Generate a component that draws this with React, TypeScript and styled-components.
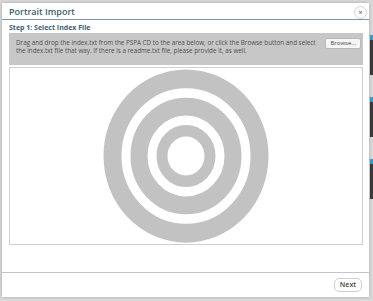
import React from "react";
import styled, { createGlobalStyle } from "styled-components";

const GlobalStyle = createGlobalStyle`
  html, body {
    margin: 0;
    padding: 0;
    background: #d6d6d6;
    font-family: "Open Sans", "Liberation Sans", sans-serif;
  }
`;

const Page = styled.div`
  position: relative;
  width: 373px;
  height: 301px;
  overflow: hidden;
  background: #d9d9d9;
`;

const Thumbs = styled.div`
  position: absolute;
  top: 35px;
  right: 0;
  width: 3px;
  display: flex;
  flex-direction: column;
  gap: 22px;
`;

const Thumb = styled.div`
  height: 40px;
  background: linear-gradient(#2aa0d8 0 5px, #3a3a3a 5px);
`;

const Modal = styled.div`
  position: absolute;
  top: 3px;
  left: 2px;
  width: 367px;
  height: 294px;
  background: #ffffff;
  box-shadow: 0 0 3px rgba(0, 0, 0, 0.25);
  display: flex;
  flex-direction: column;
`;

const Header = styled.div`
  height: 17px;
  display: flex;
  align-items: center;
  justify-content: space-between;
  padding: 1px 2px 0 7px;
  box-sizing: border-box;
  border-bottom: 1px solid #7c97a6;
`;

const Title = styled.div`
  font-size: 9px;
  font-weight: 600;
  color: #3c5c70;
`;

const Close = styled.div`
  width: 11px;
  height: 11px;
  margin-top: 2px;
  border-radius: 50%;
  border: 1px solid #d4d4d4;
  color: #777;
  font-size: 7px;
  line-height: 11px;
  text-align: center;
  font-weight: 700;
`;

const Body = styled.div`
  display: flex;
  flex-direction: column;
  padding: 3px 6px 0 7px;
`;

const Step = styled.div`
  font-size: 7px;
  font-weight: 700;
  color: #3d6078;
  height: 10px;
  line-height: 10px;
`;

const Notice = styled.div`
  height: 32px;
  background: #c7c7c7;
  display: flex;
  align-items: flex-start;
  justify-content: space-between;
  padding: 5px 2px 0 7px;
  box-sizing: border-box;
`;

const NoticeText = styled.p`
  margin: 1px 0 0;
  width: 300px;
  font-size: 6.3px;
  line-height: 8px;
  color: #505050;
`;

const SmallButton = styled.button`
  font-family: "Open Sans", "Liberation Sans", sans-serif;
  font-size: ${(p: { $size?: number }) => p.$size ?? 6}px;
  color: #444;
  background: #f6f6f6;
  border: 1px solid #b8b8b8;
  border-radius: 2px;
  padding: 0 4px;
  height: 11px;
  line-height: 9px;
  cursor: pointer;
`;

const Drop = styled.div`
  margin-top: 2px;
  height: 176px;
  border: 1px solid #cfcfcf;
  display: flex;
  align-items: center;
  justify-content: center;
`;

const Footer = styled.div`
  margin-top: auto;
  margin-bottom: 1px;
  border-top: 1px solid #c4c4c4;
  height: 23px;
  display: flex;
  align-items: center;
  justify-content: flex-end;
  padding-right: 7px;
`;

const NextButton = styled(SmallButton)`
  height: 14px;
  border-radius: 5px;
  border-color: #cfcfcf;
  background: #fff;
  padding: 0 5px;
  font-weight: 600;
`;

function Target() {
  return (
    <svg width="172" height="176" viewBox="0 0 172 176">
      <g fill="none" stroke="#c2c2c2" transform="translate(86 88) scale(1 1.05)">
        <circle r="73.5" strokeWidth="18" />
        <circle r="47" strokeWidth="17" />
        <circle r="24" strokeWidth="11" />
      </g>
    </svg>
  );
}

export default function App() {
  return (
    <Page>
      <GlobalStyle />
      <Thumbs>
        <Thumb />
        <Thumb />
        <Thumb />
      </Thumbs>
      <Modal>
        <Header>
          <Title>Portrait Import</Title>
          <Close>×</Close>
        </Header>
        <Body>
          <Step>Step 1: Select Index File</Step>
          <Notice>
            <NoticeText>
              Drag and drop the index.txt from the PSPA CD to the area below, or click the Browse button and select
              the index.txt file that way. If there is a readme.txt file, please provide it, as well.
            </NoticeText>
            <SmallButton>Browse...</SmallButton>
          </Notice>
          <Drop>
            <Target />
          </Drop>
        </Body>
        <Footer>
          <NextButton $size={7}>Next</NextButton>
        </Footer>
      </Modal>
    </Page>
  );
}
